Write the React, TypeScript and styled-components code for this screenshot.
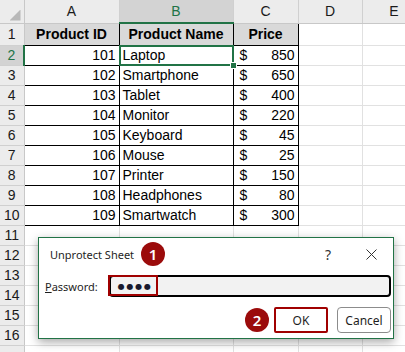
import styled, { createGlobalStyle } from "styled-components"

const GlobalStyle = createGlobalStyle`
    html, body {
        margin: 0;
        padding: 0;
        background: #ffffff;
        overflow: hidden;
    }
`

const green = "#217346"
const marker = "#a00000"

const colWidths = [24, 95, 114, 65, 64, 64]
const letters = ["A", "B", "C", "D", "E"]

const products: [number, string, number][] = [
    [101, "Laptop", 850],
    [102, "Smartphone", 650],
    [103, "Tablet", 400],
    [104, "Monitor", 220],
    [105, "Keyboard", 45],
    [106, "Mouse", 25],
    [107, "Printer", 150],
    [108, "Headphones", 80],
    [109, "Smartwatch", 300],
]

const Screen = styled.div`
    position: relative;
    width: 405px;
    height: 352px;
    overflow: hidden;
    background: #ffffff;
    font-family: "Liberation Sans", Arial, sans-serif;
`

const Sheet = styled.table`
    border-collapse: collapse;
    table-layout: fixed;
    width: ${colWidths.reduce((a, b) => a + b, 0)}px;
    font-size: 14px;
    color: #000;
`

const Corner = styled.th`
    position: relative;
    height: 22px;
    padding: 0;
    background: #ececec;
    border: 1px solid #c8c8c8;
    border-top: none;
    border-left: none;
`

const CornerMark = styled.span`
    position: absolute;
    right: 3px;
    bottom: 2px;
    width: 11px;
    height: 11px;
    background: #b8b8b8;
    clip-path: polygon(100% 0, 100% 100%, 0 100%);
`

const ColHead = styled.th<{ $active?: boolean }>`
    height: 22px;
    padding: 0;
    font-weight: normal;
    text-align: center;
    background: ${p => (p.$active ? "#d3d3d3" : "#ececec")};
    color: ${p => (p.$active ? green : "#1a1a1a")};
    border: 1px solid #d0d0d0;
    border-top: none;
    border-bottom: ${p => (p.$active ? `2px solid ${green}` : "1px solid #c8c8c8")};
`

const RowHead = styled.th<{ $active?: boolean; $tall?: boolean }>`
    height: ${p => (p.$tall ? 21 : 19)}px;
    padding: 0;
    font-weight: normal;
    text-align: center;
    background: ${p => (p.$active ? "#d3d3d3" : "#ececec")};
    color: ${p => (p.$active ? green : "#1a1a1a")};
    border: 1px solid #d0d0d0;
    border-left: none;
    border-right: ${p => (p.$active ? `2px solid ${green}` : "1px solid #c8c8c8")};
`

const Cell = styled.td<{ $boxed?: boolean; $head?: boolean; $align?: string; $selected?: boolean }>`
    position: relative;
    padding: 0 3px;
    white-space: nowrap;
    overflow: visible;
    text-align: ${p => p.$align || "left"};
    font-weight: ${p => (p.$head ? "bold" : "normal")};
    background: ${p => (p.$head ? "#d9d9d9" : "#ffffff")};
    border: 1px solid ${p => (p.$boxed ? "#000000" : "#e1e1e1")};
    ${p =>
        p.$selected &&
        `
        &::after {
            content: "";
            position: absolute;
            inset: -1px -1px -1px -1px;
            border: 2px solid ${green};
            pointer-events: none;
        }
        &::before {
            content: "";
            position: absolute;
            right: -4px;
            bottom: -4px;
            width: 5px;
            height: 5px;
            background: ${green};
            border: 1px solid #fff;
            z-index: 1;
        }
    `}
`

const Price = styled.div`
    display: flex;
    justify-content: space-between;
    padding-left: 3px;
`

const Dialog = styled.div`
    position: absolute;
    left: 38px;
    top: 237px;
    width: 356px;
    height: 102px;
    box-sizing: border-box;
    background: #ffffff;
    border: 1px solid ${green};
    box-shadow: 0 3px 9px rgba(0, 0, 0, 0.35);
    font-family: "Noto Sans", "Open Sans", sans-serif;
    font-size: 11px;
    color: #1e1e1e;
    display: flex;
    flex-direction: column;
`

const TitleBar = styled.div`
    display: flex;
    align-items: center;
    height: 32px;
    padding: 0 11px;
`

const Title = styled.span`
    font-size: 11px;
    margin-right: 7px;
`

const Badge = styled.span`
    display: inline-flex;
    align-items: center;
    justify-content: center;
    width: 24px;
    height: 24px;
    border-radius: 50%;
    background: #9b0b0b;
    color: #ffffff;
    font-size: 15px;
    font-weight: 600;
    flex-shrink: 0;
`

const TitleTools = styled.div`
    margin-left: auto;
    display: flex;
    align-items: center;
    gap: 35px;
    padding-right: 5px;
`

const Help = styled.span`
    font-size: 14px;
    color: #333;
`

const FieldRow = styled.div`
    display: flex;
    align-items: center;
    margin-top: 5px;
    padding: 0 2px 0 6px;
`

const Label = styled.span`
    margin-right: 11px;
    u {
        text-decoration: underline;
    }
`

const PasswordBox = styled.div`
    position: relative;
    flex: 1;
    height: 22px;
    box-sizing: border-box;
    border: 2px solid #000;
    border-radius: 4px;
    background: #f2f2f2;
    display: flex;
    align-items: center;
    padding-left: 7px;
`

const Highlight = styled.span`
    position: absolute;
    left: -3px;
    top: -2px;
    bottom: -1px;
    width: 50px;
    box-sizing: border-box;
    border: 2px solid ${marker};
`

const Dots = styled.span`
    font-family: "DejaVu Sans", sans-serif;
    font-size: 8px;
    letter-spacing: 1.8px;
    color: #1a1a2e;
`

const ButtonRow = styled.div`
    display: flex;
    align-items: center;
    justify-content: flex-end;
    gap: 9px;
    margin-top: 10px;
    padding-right: 2px;
`

const Button = styled.button<{ $marked?: boolean }>`
    width: 54px;
    height: 26px;
    box-sizing: border-box;
    background: #ffffff;
    font-family: "Noto Sans", "Open Sans", sans-serif;
    font-size: 12px;
    color: #1e1e1e;
    border: ${p => (p.$marked ? `2px solid ${marker}` : "1px solid #8c8c8c")};
    border-radius: ${p => (p.$marked ? "2px" : "4px")};
    padding: 0;
`

const BadgeSlot = styled.span`
    margin-right: -4px;
    display: flex;
`

const CloseIcon = () => (
    <svg width="11" height="11" viewBox="0 0 11 11">
        <path d="M0.5 0.5 L10.5 10.5 M10.5 0.5 L0.5 10.5" stroke="#333" strokeWidth="1" />
    </svg>
)

const App = () => {
    const rowCount = 17
    return (
        <Screen>
            <GlobalStyle />
            <Sheet>
                <colgroup>
                    {colWidths.map((w, i) => (
                        <col key={i} style={{ width: w }} />
                    ))}
                </colgroup>
                <thead>
                    <tr>
                        <Corner>
                            <CornerMark />
                        </Corner>
                        {letters.map(l => (
                            <ColHead key={l} $active={l === "B"}>
                                {l}
                            </ColHead>
                        ))}
                    </tr>
                </thead>
                <tbody>
                    <tr>
                        <RowHead $tall>1</RowHead>
                        <Cell $boxed $head $align="center">Product ID</Cell>
                        <Cell $boxed $head $align="center">Product Name</Cell>
                        <Cell $boxed $head $align="center">Price</Cell>
                        <Cell />
                        <Cell />
                    </tr>
                    {products.map(([id, name, price], i) => (
                        <tr key={id}>
                            <RowHead $active={i === 0}>{i + 2}</RowHead>
                            <Cell $boxed $align="right">{id}</Cell>
                            <Cell $boxed $selected={i === 0}>{name}</Cell>
                            <Cell $boxed>
                                <Price>
                                    <span>$</span>
                                    <span>{price}</span>
                                </Price>
                            </Cell>
                            <Cell />
                            <Cell />
                        </tr>
                    ))}
                    {Array.from({ length: rowCount - 10 }, (_, i) => (
                        <tr key={`e${i}`}>
                            {/* the last row only peeks in at the bottom edge, its number is out of view */}
                            <RowHead>{i + 11 < rowCount ? i + 11 : ""}</RowHead>
                            <Cell />
                            <Cell />
                            <Cell />
                            <Cell />
                            <Cell />
                        </tr>
                    ))}
                </tbody>
            </Sheet>

            <Dialog>
                <TitleBar>
                    <Title>Unprotect Sheet</Title>
                    <Badge>1</Badge>
                    <TitleTools>
                        <Help>?</Help>
                        <CloseIcon />
                    </TitleTools>
                </TitleBar>
                <FieldRow>
                    <Label>
                        <u>P</u>assword:
                    </Label>
                    <PasswordBox>
                        <Highlight />
                        <Dots>●●●●</Dots>
                    </PasswordBox>
                </FieldRow>
                <ButtonRow>
                    <BadgeSlot>
                        <Badge>2</Badge>
                    </BadgeSlot>
                    <Button $marked>OK</Button>
                    <Button>Cancel</Button>
                </ButtonRow>
            </Dialog>
        </Screen>
    )
}

export default App
